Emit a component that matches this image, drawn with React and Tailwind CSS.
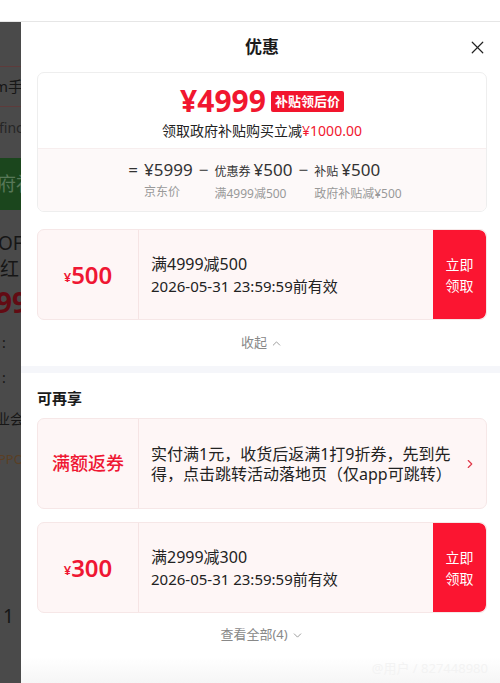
import { X, ChevronUp, ChevronDown, ChevronRight } from 'lucide-react';

const font = { fontFamily: '"Noto Sans", "Noto Sans CJK SC", sans-serif' };

function Coupon({ amount, title, date }) {
  return (
    <div className="flex h-[91px] rounded-[7px] border border-[#f6e7e7] bg-[#fef6f6] overflow-hidden">
      <div className="w-[101px] shrink-0 flex items-center justify-center border-r border-[#f5e4e4] text-[#ef1733]">
        <span className="text-[13px] font-semibold mt-[6px]">¥</span>
        <span className="text-[24px] font-semibold leading-none">{amount}</span>
      </div>
      <div className="flex-1 flex flex-col justify-center pl-[12px] text-[#222]">
        <p className="text-[16px] leading-[22px]">{title}</p>
        <p className="text-[15px] leading-[22px]">{date}</p>
      </div>
      <button className="w-[53px] shrink-0 bg-[#fb1531] text-white text-[14px] leading-[21px] flex flex-col items-center justify-center rounded-r-[7px]">
        <span>立即</span>
        <span>领取</span>
      </button>
    </div>
  );
}

function BackdropStrip() {
  return (
    <div className="w-[21px] shrink-0 bg-[#4a4a4a] overflow-hidden whitespace-nowrap text-[#161616]">
      <div className="h-[44px]" />
      <div className="h-px bg-[#5e3b3b] w-full" />
      <div className="h-[39px] flex items-center text-[15px] -ml-[6px]">m手机</div>
      <div className="h-px bg-[#5e3b3b] w-full" />
      <div className="h-[41px] flex items-center text-[14px] text-[#262626] -ml-[1px]">finc</div>
      <div className="h-[10px]" />
      <div className="h-[52px] bg-[#1b461d] flex items-center text-[19px] text-[#587858] -ml-[3px]">府补</div>
      <div className="h-[20px]" />
      <div className="h-[26px] flex items-center text-[19px] -ml-[2px]">OF</div>
      <div className="h-[26px] flex items-center text-[19px]">红</div>
      <div className="h-[40px] flex items-center text-[28px] font-bold text-[#620b13] -ml-[4px]">99</div>
      <div className="h-[40px] flex items-center text-[14px] pl-[2px]">:</div>
      <div className="h-[30px] flex items-center text-[14px] pl-[2px]">:</div>
      <div className="h-[52px] flex items-center text-[14px] -ml-[4px]">业会</div>
      <div className="h-[32px] flex items-center text-[13px] text-[#5a3f24] -ml-[2px]">PPO</div>
      <div className="h-[160px] flex items-end pb-[6px] text-[19px] pl-[3px]">1</div>
    </div>
  );
}

export default function App() {
  return (
    <div className="w-[500px] h-[683px] overflow-hidden bg-white flex flex-col" style={font}>
      <div className="h-[22px] shrink-0 bg-white border-b border-[#e6e6e6]" />
      <div className="flex flex-1 min-h-0">
        <BackdropStrip />

        <div className="flex-1 flex flex-col bg-white min-h-0">
          {/* Header */}
          <div className="h-[50px] shrink-0 relative flex items-center justify-center pl-[16px] pr-[13px]">
            <h1 className="text-[17px] font-bold text-[#1a1a1a]">优惠</h1>
            <X className="absolute right-[12px] w-[21px] h-[21px] text-[#222]" strokeWidth={1.4} />
          </div>

          <div className="shrink-0 pl-[16px] pr-[13px]">
            {/* Price summary */}
            <div className="rounded-[7px] border border-[#eeeeee] overflow-hidden">
              <div className="h-[75px] flex flex-col items-center pt-[11px]">
                <div className="flex items-center gap-[5px] h-[34px]">
                  <span className="text-[30px] font-bold text-[#f1172f] leading-none">¥4999</span>
                  <span className="bg-[#f2152d] text-white text-[13px] font-bold px-[4px] h-[21px] leading-[21px] rounded-[2px] mt-[1px]">补贴领后价</span>
                </div>
                <p className="text-[14px] leading-[20px] text-[#222] mt-[3px]">
                  领取政府补贴购买立减<span className="text-[#f1172f]">¥1000.00</span>
                </p>
              </div>
              <div className="h-[63px] bg-[#fdf9f9] border-t border-[#f7eeee] flex items-start justify-center pt-[9px] pl-[6px] text-[#333]">
                <span className="text-[17px] leading-[24px] mr-[6px]">=</span>
                <div className="flex flex-col">
                  <span className="text-[17px] leading-[24px]">¥5999</span>
                  <span className="text-[12px] leading-[20px] text-[#999]">京东价</span>
                </div>
                <span className="text-[17px] leading-[24px] mx-[6px]">−</span>
                <div className="flex flex-col">
                  <span className="text-[17px] leading-[24px]"><span className="text-[12px]">优惠券 </span>¥500</span>
                  <span className="text-[12px] leading-[20px] text-[#999]">满4999减500</span>
                </div>
                <span className="text-[17px] leading-[24px] mx-[6px]">−</span>
                <div className="flex flex-col">
                  <span className="text-[17px] leading-[24px]"><span className="text-[12px]">补贴 </span>¥500</span>
                  <span className="text-[12px] leading-[20px] text-[#999]">政府补贴减¥500</span>
                </div>
              </div>
            </div>

            <div className="mt-[17px]">
              <Coupon amount="500" title="满4999减500" date="2026-05-31 23:59:59前有效" />
            </div>

            <div className="h-[46px] flex items-center justify-center text-[13px] text-[#888] gap-[3px]">
              收起 <ChevronUp className="w-[13px] h-[13px]" strokeWidth={1.5} />
            </div>
          </div>

          <div className="h-[7px] shrink-0 bg-[#f5f6fa]" />

          <div className="shrink-0 pl-[16px] pr-[13px]">
            <div className="h-[45px] flex items-center pt-[5px]">
              <h2 className="text-[15px] font-bold text-[#1a1a1a]">可再享</h2>
            </div>

            <div className="flex h-[91px] rounded-[7px] border border-[#f6e7e7] bg-[#fef6f6] overflow-hidden">
              <div className="w-[101px] shrink-0 flex items-center justify-center border-r border-[#f5e4e4] text-[#ef1733] text-[18px] font-medium">
                满额返券
              </div>
              <div className="flex-1 flex items-center pl-[12px] text-[#222] text-[16px] leading-[20px]">
                <p>实付满1元，收货后返满1打9折券，先到先<br />得，点击跳转活动落地页（仅app可跳转）</p>
              </div>
              <div className="w-[30px] shrink-0 flex items-center justify-end pr-[9px]">
                <ChevronRight className="w-[14px] h-[14px] text-[#e0394a]" strokeWidth={2} />
              </div>
            </div>

            <div className="mt-[13px]">
              <Coupon amount="300" title="满2999减300" date="2026-05-31 23:59:59前有效" />
            </div>

            <div className="h-[44px] flex items-center justify-center text-[13px] text-[#888] gap-[3px]">
              查看全部(4) <ChevronDown className="w-[13px] h-[13px]" strokeWidth={1.5} />
            </div>
          </div>

          <div className="flex-1 min-h-0 overflow-hidden bg-gradient-to-b from-white to-[#f6f6f6] flex items-start justify-end pr-[12px] pt-[2px]">
            <span className="text-[13px] leading-[18px] text-[#f3f3f3]">@用户 / 827448980</span>
          </div>
        </div>
      </div>
    </div>
  );
}
